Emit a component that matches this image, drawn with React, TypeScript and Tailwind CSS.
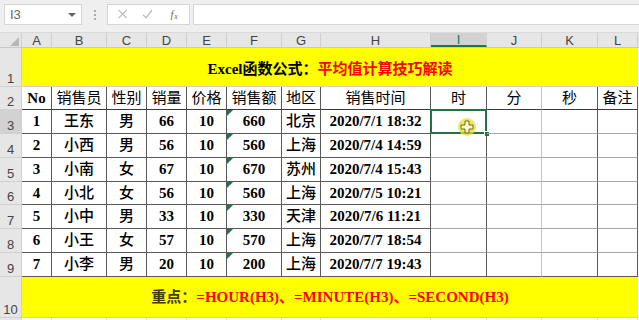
import React from "react";

const cols = ["A", "B", "C", "D", "E", "F", "G", "H", "I", "J", "K", "L"];
const widths = [30, 55, 40, 40, 40, 55, 39, 110, 56, 55, 56, 40];

const rows = [
  ["1", "王东", "男", "66", "10", "660", "北京", "2020/7/1 18:32"],
  ["2", "小西", "男", "56", "10", "560", "上海", "2020/7/4 14:59"],
  ["3", "小南", "女", "67", "10", "670", "苏州", "2020/7/4 15:43"],
  ["4", "小北", "女", "56", "10", "560", "上海", "2020/7/5 10:21"],
  ["5", "小中", "男", "33", "10", "330", "天津", "2020/7/6 11:21"],
  ["6", "小王", "女", "57", "10", "570", "上海", "2020/7/7 18:54"],
  ["7", "小李", "男", "20", "10", "200", "上海", "2020/7/7 19:43"],
];
const heights = [24, 24, 24, 23, 24, 24, 24];
const header = ["No", "销售员", "性别", "销量", "价格", "销售额", "地区", "销售时间", "时", "分", "秒", "备注"];

const serif = "font-['Liberation_Serif','Noto_Sans_CJK_SC',serif]";

const rightBorder = (i: number) => {
  // I|J dark, J|K light, K|L dark
  if (i === 9) return "border-r-[#c4c4c4]";
  return "border-r-[#5a5a5a]";
};

const RowHead = ({ n, h, active }: { n: string; h: number; active?: boolean }) => (
  <div
    className={`w-[22px] shrink-0 flex items-end justify-center pb-[1px] border-r border-b border-[#d0d0d0] text-[13px] leading-none text-[#444] font-['Liberation_Sans',sans-serif] ${
      active ? "bg-[#d2d2d2]" : "bg-[#e6e6e6]"
    }`}
    style={{ height: h }}
  >
    {n}
  </div>
);

export default function App() {
  return (
    <div className="w-[639px] h-[320px] overflow-hidden bg-white relative">
      {/* toolbar */}
      <div className="h-[33px] bg-[#efefef] flex items-start pt-[4px] border-b border-[#dadada]">
        <div className="ml-[4px] w-[78px] h-[21px] bg-white border border-[#d4d4d4] flex items-center px-[5px] text-[13px] text-[#666] font-['Liberation_Sans',sans-serif]">
          <span className="flex-1">I3</span>
          <span className="w-0 h-0 border-l-[4px] border-r-[4px] border-t-[4px] border-l-transparent border-r-transparent border-t-[#666]" />
        </div>
        <div className="w-[25px] h-[21px] flex flex-col items-center justify-center gap-[2px]">
          <span className="w-[2px] h-[2px] bg-[#aaa]" />
          <span className="w-[2px] h-[2px] bg-[#aaa]" />
          <span className="w-[2px] h-[2px] bg-[#aaa]" />
        </div>
        <div className="w-[83px] h-[21px] bg-white border border-[#d4d4d4] flex items-center">
          <svg width="83" height="21" viewBox="0 0 83 21">
            <path d="M11 6 L19 14 M19 6 L11 14" stroke="#b4b4b4" strokeWidth="1.2" fill="none" />
            <path d="M36 11 L39 14 L45 6" stroke="#b4b4b4" strokeWidth="1.2" fill="none" />
            <text x="64" y="14" fontSize="11" fontStyle="italic" fill="#666" fontFamily="Liberation Serif, serif">f</text>
            <text x="68" y="15" fontSize="8" fontStyle="italic" fill="#666" fontFamily="Liberation Serif, serif">x</text>
          </svg>
        </div>
        <div className="ml-[3px] flex-1 h-[21px] bg-white border border-[#d4d4d4] border-r-0" />
      </div>

      {/* column headers */}
      <div className="flex h-[15px] bg-[#e6e6e6] border-b border-[#c8c8c8]">
        <div className="w-[22px] shrink-0 border-r border-[#d0d0d0] relative">
          <svg className="absolute right-[2px] bottom-[1px]" width="9" height="9" viewBox="0 0 9 9">
            <path d="M9 0 L9 9 L0 9 Z" fill="#b8b8b8" />
          </svg>
        </div>
        {cols.map((c, i) => (
          <div
            key={c}
            className={`shrink-0 flex items-center justify-center text-[13px] leading-none font-['Liberation_Sans',sans-serif] border-r border-[#d0d0d0] ${
              c === "I" ? "bg-[#d2d2d2] text-[#217346] border-b-2 border-b-[#217346]" : "text-[#444]"
            }`}
            style={{ width: widths[i] }}
          >
            {c}
          </div>
        ))}
      </div>

      {/* row 1 */}
      <div className="flex">
        <RowHead n="1" h={39} />
        <div className={`w-[616px] h-[39px] bg-[#ffff00] border-b border-[#d0d0d0] flex items-center justify-center pt-[4px] text-[15px] font-bold ${serif}`}>
          <span className="text-black">Excel函数公式：</span>
          <span className="text-[#ff0000]">平均值计算技巧解读</span>
        </div>
      </div>

      {/* row 2 header */}
      <div className="flex">
        <RowHead n="2" h={23} />
        {header.map((t, i) => (
          <div
            key={t}
            className={`shrink-0 h-[23px] flex items-center justify-center border-r border-b border-b-[#3c3c3c] ${rightBorder(i)} text-[15px] text-black ${serif} ${
              i === 0 ? "font-bold" : ""
            }`}
            style={{ width: widths[i] }}
          >
            {t}
          </div>
        ))}
      </div>

      {/* data rows */}
      {rows.map((r, ri) => (
        <div key={ri} className="flex">
          <RowHead n={String(ri + 3)} h={heights[ri]} active={ri === 0} />
          {widths.map((w, ci) => {
            const val = r[ci];
            const isText = ci === 1 || ci === 2 || ci === 6;
            const dark = ci < 8;
            return (
              <div
                key={ci}
                className={`shrink-0 relative flex items-center justify-center border-r border-b ${rightBorder(ci)} ${
                  dark ? "border-b-[#5a5a5a]" : ri === 6 ? "border-b-[#5a5a5a]" : "border-b-[#a8a8a8]"
                } text-[15px] text-black ${serif} ${isText ? "font-medium" : "font-bold"}`}
                style={{ width: w, height: heights[ri] }}
              >
                {ci === 5 && (
                  <svg className="absolute left-0 top-0" width="6" height="6" viewBox="0 0 6 6">
                    <path d="M0 0 L6 0 L0 6 Z" fill="#217346" />
                  </svg>
                )}
                {val}
                {ci === 8 && ri === 0 && (
                  <>
                    <div className="absolute left-[-1px] top-[-1px] w-[57px] h-[25px] border-2 border-[#217346]" />
                    <div className="absolute right-[-4px] bottom-[-4px] w-[6px] h-[6px] bg-[#217346] border border-white" />
                    <svg className="absolute left-[26px] top-[7px]" width="20" height="20" viewBox="0 0 20 20">
                      <circle cx="10" cy="10" r="9" fill="#e8e030" fillOpacity="0.75" />
                      <path d="M8 4 H12 V8 H16 V12 H12 V16 H8 V12 H4 V8 H8 Z" fill="#fff8c0" stroke="#6b6b2a" strokeWidth="1" />
                    </svg>
                  </>
                )}
              </div>
            );
          })}
        </div>
      ))}

      {/* row 10 */}
      <div className="flex">
        <RowHead n="10" h={41} />
        <div className={`w-[616px] h-[41px] bg-[#ffff00] border-b border-[#d0d0d0] flex items-center justify-center text-[15px] font-bold ${serif}`}>
          <span className="text-[#404000]">重点：</span>
          <span className="text-[#ff0000]">=HOUR(H3)、=MINUTE(H3)、=SECOND(H3)</span>
        </div>
      </div>
      <div className="flex">
        <RowHead n="" h={12} />
        {widths.map((w, i) => (
          <div key={i} className="shrink-0 h-[12px] border-r border-[#d8d8d8]" style={{ width: w }} />
        ))}
      </div>
    </div>
  );
}
